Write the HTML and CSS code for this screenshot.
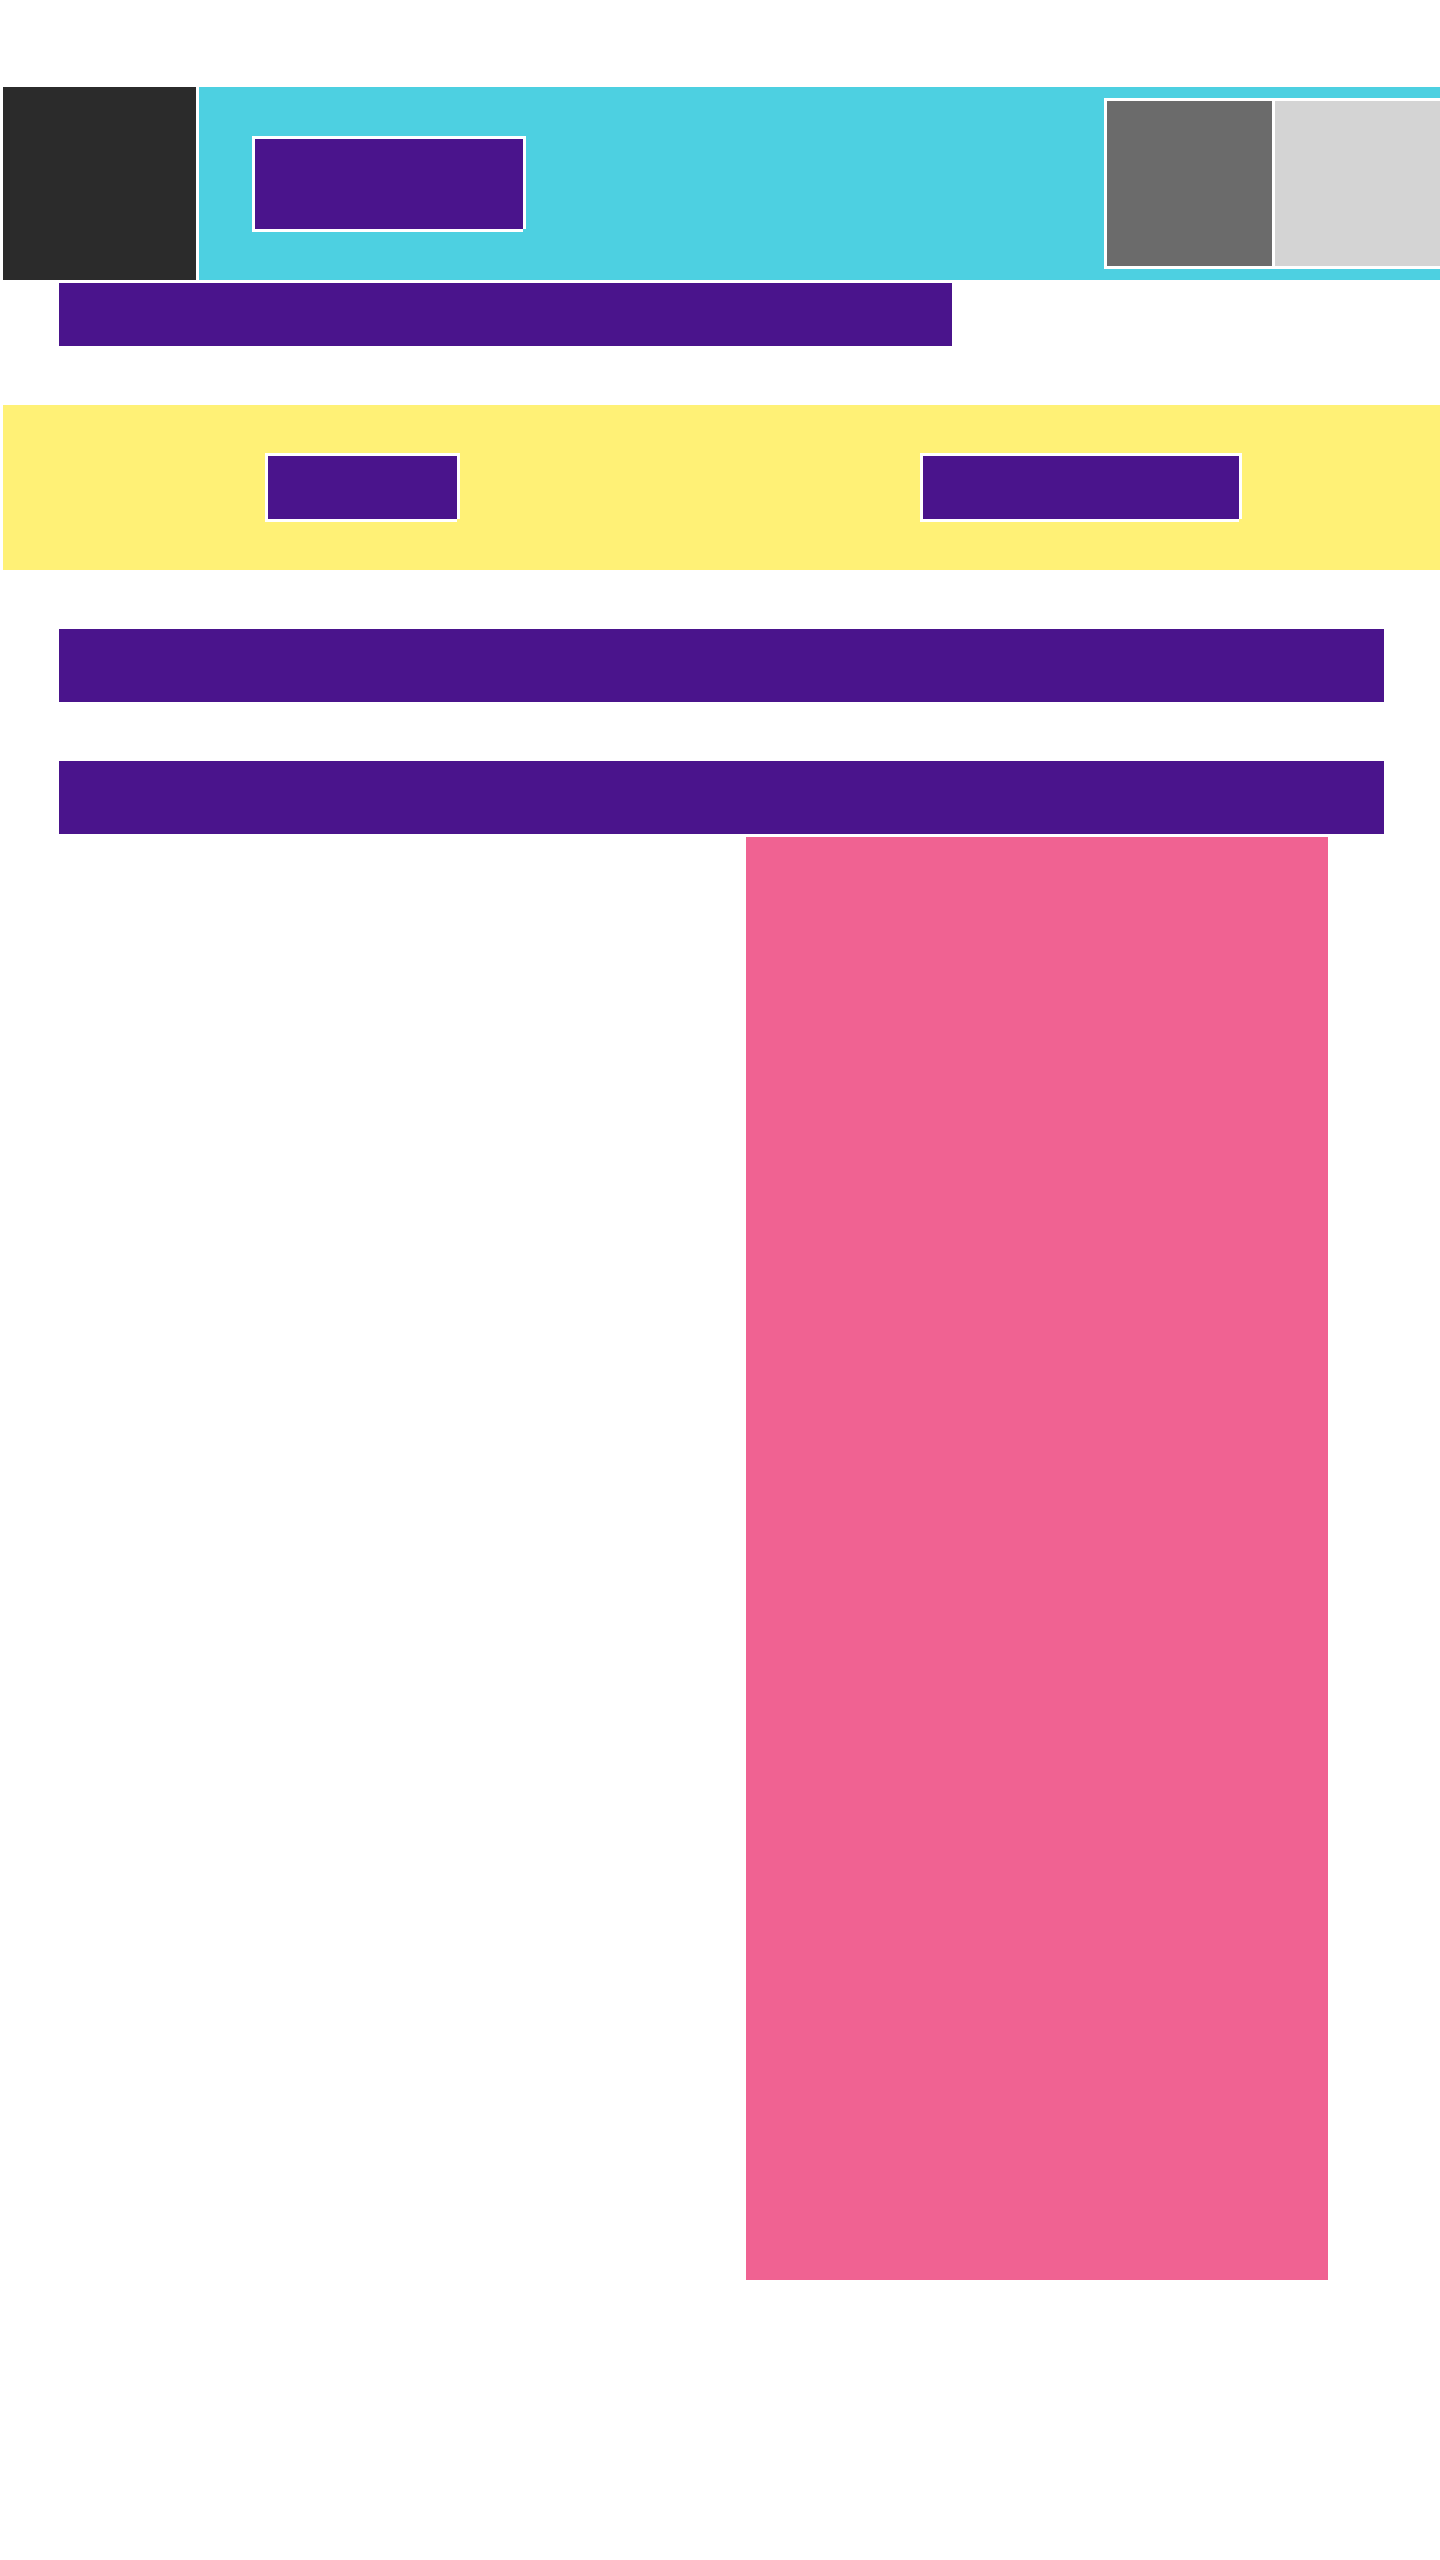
FILE: index.html
```html
<!DOCTYPE html>
<html lang="en">
<head>
    <meta charset="UTF-8">
    <title>Layout</title>
    <link rel="stylesheet" href="styles.css">
</head>
<body>
    <div class="header">
        <div class="logo"></div>
        <div class="topbar">
            <div class="btn btnWide"></div>
            <div class="swatches">
                <div class="swatch dark"></div>
                <div class="swatch light"></div>
            </div>
        </div>
    </div>
    <div class="content">
        <div class="bar crumb"></div>
    </div>
    <div class="band">
        <div class="cell"><div class="btn btnSmall"></div></div>
        <div class="cell"><div class="btn btnMid"></div></div>
    </div>
    <div class="content">
        <div class="bar row"></div>
        <div class="bar row"></div>
        <div class="panel"></div>
    </div>
</body>
</html>
```

FILE: styles.css
```css
html,body{margin:0;padding:0;background:#fff;}
body{overflow-x:hidden;width:1440px;min-height:2560px;}

.header{display:flex;gap:3px;margin:87px 0 0 3px;height:193px;}
.logo{width:193px;flex:none;background:#2b2b2b;}
.topbar{flex:1;display:flex;align-items:center;padding-left:53px;background:#4dd0e1;min-width:0;}
.swatches{display:flex;gap:3px;padding:3px;margin-left:auto;margin-right:-3px;flex:none;background:#fff;}
.swatch{width:165px;height:165px;}
.swatch.dark{background:#6b6b6b;}
.swatch.light{background:#d4d4d4;}

/* white frame, bottom-right corner left open */
.btn{background:#4a148c;border-top:3px solid #fff;border-left:3px solid #fff;box-shadow:3px 0 #fff,0 3px #fff;margin:0 3px 3px 0;}
.btnWide{width:268px;height:90px;}
.btnSmall{width:189px;height:63px;}
.btnMid{width:316px;height:63px;}

.content{display:flex;flex-direction:column;padding:0 56px 0 59px;}
.bar{background:#4a148c;}
.crumb{width:893px;height:63px;margin-top:3px;}
.row{height:73px;margin-top:59px;}

.band{display:grid;grid-template-columns:1fr 1fr;margin:59px 0 0 3px;height:165px;background:#fff176;}
.cell{display:flex;align-items:center;justify-content:center;}

.panel{width:582px;height:1443px;margin:3px 56px 0 auto;background:#f06292;}
```
